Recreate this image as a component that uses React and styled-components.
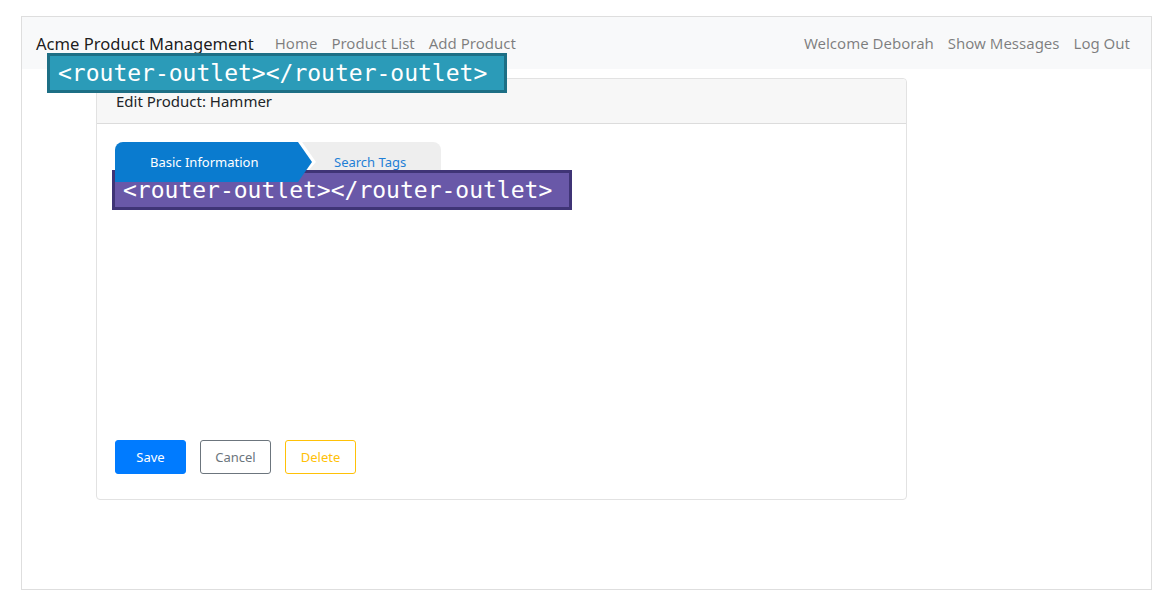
import styled, { createGlobalStyle } from "styled-components";

const GlobalStyle = createGlobalStyle`
  body {
    margin: 0;
    background: #fff;
    font-family: "Noto Sans", "Open Sans", sans-serif;
  }
`

const Frame = styled.div`
  position: relative;
  margin: 16px 0 0 21px;
  width: 1129px;
  height: 572px;
  border: 1px solid #dedede;
`

const NavBar = styled.nav`
  display: flex;
  align-items: center;
  height: 52px;
  padding: 0 21px 0 14px;
  background: #f8f9fa;
`

const Brand = styled.span`
  font-size: 16.6px;
  color: rgba(0, 0, 0, 0.9);
  margin-right: 21px;
`

const NavLinks = styled.div`
  display: flex;
  gap: 14px;
  margin-left: ${p => (p.right ? "auto" : "0")};
`

const NavLink = styled.a`
  font-size: 15px;
  color: rgba(0, 0, 0, 0.5);
  text-decoration: none;
`

const Card = styled.div`
  display: flex;
  flex-direction: column;
  margin: 9px 0 0 74px;
  width: 809px;
  height: 420px;
  border: 1px solid #e2e2e2;
  border-radius: 4px;
`

const CardHeader = styled.div`
  display: flex;
  align-items: center;
  height: 44px;
  padding: 0 19px;
  background: #f7f7f7;
  border-bottom: 1px solid #dcdcdc;
  font-size: 15px;
  color: #212529;
  border-radius: 4px 4px 0 0;
`

const CardBody = styled.div`
  flex: 1;
  display: flex;
  flex-direction: column;
  padding: 18px 18px 25px;
`

const TabBar = styled.div`
  display: flex;
  height: 40px;
`

const ActiveTab = styled.div`
  position: relative;
  z-index: 1;
  display: flex;
  align-items: center;
  width: 197px;
  padding-left: 35px;
  box-sizing: border-box;
  background: #0a7bcf;
  color: #fff;
  font-size: 13px;
  border-radius: 8px 0 0 0;
  clip-path: polygon(0 0, calc(100% - 14px) 0, 100% 50%, calc(100% - 14px) 100%, 0 100%);
`

const Tab = styled.div`
  display: flex;
  align-items: center;
  width: 143px;
  margin-left: -14px;
  padding-left: 36px;
  box-sizing: border-box;
  background: #eeeeee;
  color: #1f7fd6;
  font-size: 13px;
  border-radius: 0 8px 0 0;
  clip-path: polygon(0 0, 100% 0, 100% 100%, 0 100%, 18px 50%, 4px 0);
`

const Buttons = styled.div`
  display: flex;
  gap: 14px;
  margin-top: auto;
`

const Button = styled.button`
  width: 71px;
  height: 34px;
  border-radius: 3px;
  font-family: inherit;
  font-size: 13px;
  background: ${p => (p.primary ? "#007bff" : "#fff")};
  color: ${p => p.color};
  border: 1px solid ${p => p.border};
`

const Outlet = styled.div`
  position: absolute;
  left: ${p => p.x}px;
  top: ${p => p.y}px;
  width: 460px;
  height: 40px;
  box-sizing: border-box;
  padding-left: 8px;
  display: flex;
  align-items: center;
  background: ${p => p.bg};
  border: 3px solid ${p => p.edge};
  color: #fff;
  font-family: "DejaVu Sans Mono", monospace;
  font-size: 23px;
`

export default function App() {
  return (
    <>
      <GlobalStyle />
      <Frame>
        <NavBar>
          <Brand>Acme Product Management</Brand>
          <NavLinks>
            <NavLink>Home</NavLink>
            <NavLink>Product List</NavLink>
            <NavLink>Add Product</NavLink>
          </NavLinks>
          <NavLinks right>
            <NavLink>Welcome Deborah</NavLink>
            <NavLink>Show Messages</NavLink>
            <NavLink>Log Out</NavLink>
          </NavLinks>
        </NavBar>
        <Card>
          <CardHeader>Edit Product: Hammer</CardHeader>
          <CardBody>
            <TabBar>
              <ActiveTab>Basic Information</ActiveTab>
              <Tab>Search Tags</Tab>
            </TabBar>
            <Buttons>
              <Button primary color="#fff" border="#007bff">Save</Button>
              <Button color="#6c757d" border="#6c757d">Cancel</Button>
              <Button color="#ffc107" border="#ffc107">Delete</Button>
            </Buttons>
          </CardBody>
        </Card>
        <Outlet x={25} y={36} bg="#2b9bb8" edge="#1d6f85">{"<router-outlet></router-outlet>"}</Outlet>
        <Outlet x={90} y={153} bg="#6958a8" edge="#3f3476">{"<router-outlet></router-outlet>"}</Outlet>
      </Frame>
    </>
  );
}
